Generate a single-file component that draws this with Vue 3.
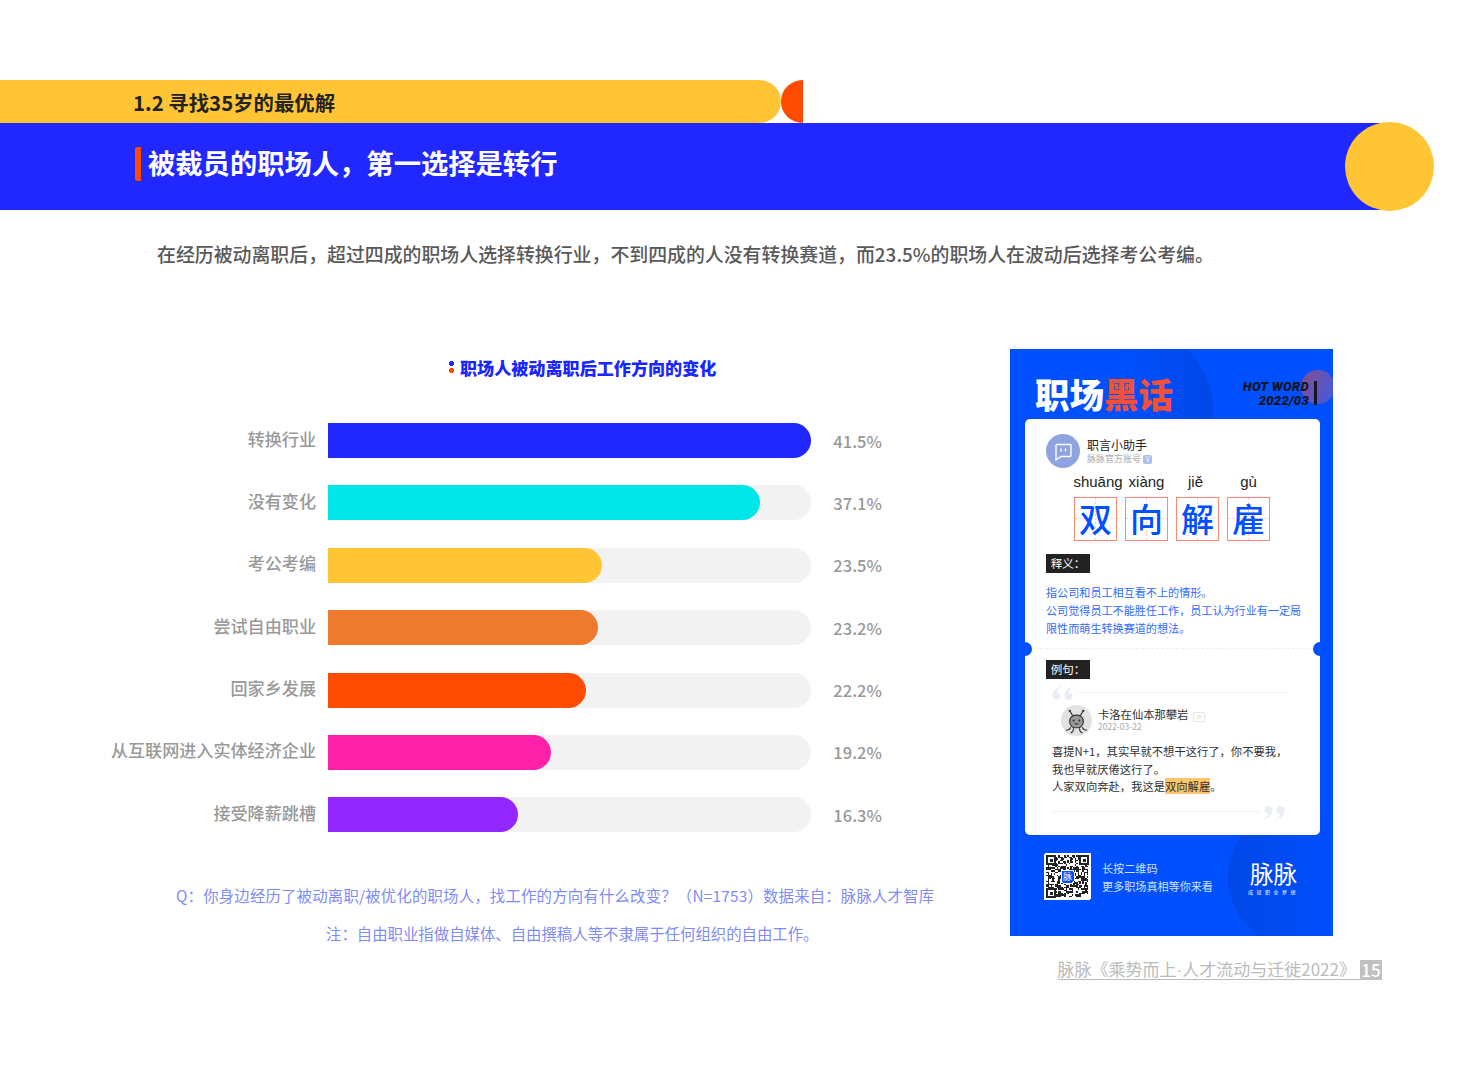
<template>
	<div class="page">
		<header class="head">
			<div class="chapter-row">
				<div class="chapter">1.2 寻找35岁的最优解</div>
				<div class="chapter-cap"></div>
			</div>
			<div class="band">
				<h1 class="band-title">被裁员的职场人，第一选择是转行</h1>
				<div class="band-ball"></div>
			</div>
		</header>

		<p class="summary">在经历被动离职后，超过四成的职场人选择转换行业，不到四成的人没有转换赛道，而23.5%的职场人在波动后选择考公考编。</p>

		<main class="main">
			<section class="chart">
				<h2 class="chart-title"><i class="dots"></i>职场人被动离职后工作方向的变化</h2>
				<div class="rows">
					<div class="row" v-for="r in rows" :key="r.name">
						<span class="row-label">{{ r.name }}</span>
						<div class="track">
							<div class="fill" :style="{ width: r.value / 41.5 * 100 + '%', background: r.color }"></div>
						</div>
						<span class="row-value">{{ r.value }}%</span>
					</div>
				</div>
				<p class="note note-q">Q：你身边经历了被动离职/被优化的职场人，找工作的方向有什么改变？（N=1753）数据来自：脉脉人才智库</p>
				<p class="note note-z">注：自由职业指做自媒体、自由撰稿人等不隶属于任何组织的自由工作。</p>
			</section>

			<aside class="side">
				<div class="poster">
					<div class="deco deco-a"></div>
					<div class="deco deco-b"></div>
					<div class="deco deco-c"></div>
					<div class="poster-head">
						<div class="poster-title">职场<em>黑话</em></div>
						<div class="hot">
							<div class="hot-text">HOT WORD<br />2022/03</div>
							<i class="hot-bar"></i>
						</div>
					</div>

					<div class="card">
						<div class="card-top">
							<div class="author">
								<svg class="author-icon" viewBox="0 0 34 34">
									<circle cx="17" cy="17" r="17" fill="#8fa3e0" />
									<path d="M10 10.500h14a1 1 0 0 1 1 1v10a1 1 0 0 1-1 1h-9l-5 3.500v-14.500a1 1 0 0 1 1-1z" fill="none" stroke="#fff" stroke-width="1.400" />
									<path d="M15 14.500v3M19.500 14.500v3" stroke="#fff" stroke-width="1.400" />
								</svg>
								<div>
									<div class="author-name">职言小助手</div>
									<div class="author-sub">脉脉官方账号 <i class="vip">V</i></div>
								</div>
							</div>
							<div class="word">
								<div class="word-col" v-for="w in word" :key="w.han">
									<span class="pinyin">{{ w.py }}</span>
									<span class="han">{{ w.han }}</span>
								</div>
							</div>
							<div class="tag tag-first">释义：</div>
							<p class="meaning">指公司和员工相互看不上的情形。<br />公司觉得员工不能胜任工作，员工认为行业有一定局<br />限性而萌生转换赛道的想法。</p>
						</div>

						<div class="cut">
							<i class="notch notch-l"></i>
							<i class="notch notch-r"></i>
						</div>

						<div class="card-bottom">
							<div class="tag">例句：</div>
							<div class="quote-open">
								<svg class="quote-mark" viewBox="0 0 22 15">
									<path d="M9 0.500C4 2 0.500 5 0.500 9.500a4 4 0 0 0 8 0.500a3.800 3.800 0 0 0-4-3.800C5 4 6.500 2.500 9 1.500zM21 0.500C16 2 12.500 5 12.500 9.500a4 4 0 0 0 8 0.500a3.800 3.800 0 0 0-4-3.800C17 4 18.500 2.500 21 1.500z" fill="#e8edf8" />
								</svg>
								<i class="quote-line"></i>
							</div>
							<div class="commenter">
								<svg class="commenter-icon" viewBox="0 0 32 32">
									<circle cx="16" cy="16" r="16" fill="#e2e2e2" />
									<path d="M9 6l3 5M23 6l-3 5" stroke="#333" stroke-width="1.200" />
									<circle cx="9" cy="6" r="1.200" fill="#333" />
									<circle cx="23" cy="6" r="1.200" fill="#333" />
									<rect x="9" y="10.500" width="14" height="13" rx="6" fill="#9a9a9a" stroke="#333" stroke-width="1.200" />
									<circle cx="13" cy="16" r="1" fill="#222" />
									<circle cx="19" cy="16" r="1" fill="#222" />
									<path d="M14 19.500h4" stroke="#222" stroke-width="1" />
									<path d="M10 23c-1 3-3 3-5 3M13 24c0 3-1 4-3 5M19 24c0 3 1 4 3 5M22 23c1 3 3 3 5 3" fill="none" stroke="#333" stroke-width="1.100" />
								</svg>
								<div>
									<div class="commenter-name">卡洛在仙本那攀岩 <i class="id-tag">ID</i></div>
									<div class="commenter-date">2022-03-22</div>
								</div>
							</div>
							<p class="example">喜提N+1，其实早就不想干这行了，你不要我，<br />我也早就厌倦这行了。<br />人家双向奔赴，我这是<mark>双向解雇</mark>。</p>
							<div class="quote-close">
								<i class="quote-line"></i>
								<svg class="quote-mark" viewBox="0 0 22 15">
									<path d="M1 14.500C6 13 9.500 10 9.500 5.500a4 4 0 0 0-8-0.500a3.800 3.800 0 0 0 4 3.800C5 11 3.500 12.500 1 13.500zM13 14.500C18 13 21.500 10 21.500 5.500a4 4 0 0 0-8-0.500a3.800 3.800 0 0 0 4 3.800C17 11 15.500 12.500 13 13.500z" fill="#e8edf8" />
								</svg>
							</div>
						</div>
					</div>

					<div class="poster-foot">
						<svg class="qr" viewBox="0 0 47 47" shape-rendering="crispEdges">
							<rect width="47" height="47" rx="2" fill="#fff" />
							<rect v-for="c in qrCells" :key="c.k" :x="c.x" :y="c.y" width="1.500" height="1.500" fill="#222" />
							<g v-for="f in qrFinders" :key="f.k" fill="none" stroke="#222">
								<rect :x="f.x + 1" :y="f.y + 1" width="8" height="8" fill="#fff" stroke-width="1.500" />
								<rect :x="f.x + 3.500" :y="f.y + 3.500" width="3" height="3" fill="#222" stroke-width="0" />
							</g>
							<rect x="17" y="17" width="13" height="13" rx="2" fill="#0050ff" stroke="#fff" />
							<text x="23.500" y="27" text-anchor="middle" class="qr-text">脉</text>
						</svg>
						<div class="foot-text">长按二维码<br />更多职场真相等你来看</div>
						<div class="logo">
							<div class="logo-name">脉脉</div>
							<div class="logo-sub">成就职业梦想</div>
						</div>
					</div>
				</div>

				<div class="pager">
					<span class="pager-text">脉脉《乘势而上<span class="pager-dot">·</span>人才流动与迁徙2022》</span>
					<span class="pager-num">15</span>
				</div>
			</aside>
		</main>
	</div>
</template>

<script setup>
	const rows = [
		{ name: '转换行业', value: 41.5, color: '#2128ff' },
		{ name: '没有变化', value: 37.1, color: '#00e5e8' },
		{ name: '考公考编', value: 23.5, color: '#ffc535' },
		{ name: '尝试自由职业', value: 23.2, color: '#ee7a2e' },
		{ name: '回家乡发展', value: 22.2, color: '#ff4b00' },
		{ name: '从互联网进入实体经济企业', value: 19.2, color: '#ff20a8' },
		{ name: '接受降薪跳槽', value: 16.3, color: '#9327ff' }
	]
	const word = [
		{ py: 'shuāng', han: '双' },
		{ py: 'xiàng', han: '向' },
		{ py: 'jiě', han: '解' },
		{ py: 'gù', han: '雇' }
	]
	// 二维码只是个样子，用固定种子撒点
	const qrCells = []
	let seed = 17
	for (let y = 2; y < 44; y += 1.5) {
		for (let x = 2; x < 44; x += 1.5) {
			seed = (seed * 1103515245 + 12345) % 2147483648
			if ((seed >> 8) % 100 < 50) qrCells.push({ k: x + '-' + y, x, y })
		}
	}
	const qrFinders = [
		{ k: 'a', x: 2, y: 2 },
		{ k: 'b', x: 35, y: 2 },
		{ k: 'c', x: 2, y: 35 }
	]
</script>

<style>
	body {
		background: #fff;
	}
</style>

<style scoped>
	.page {
		width: 1465px;
		height: 1079px;
		overflow: hidden;
		font-family: "Noto Sans CJK SC", "Noto Sans", sans-serif;
	}

	p,
	h1,
	h2 {
		margin: 0;
	}

	.head {
		padding-top: 80px;
	}

	.chapter-row {
		display: flex;
		height: 43px;
	}

	.chapter {
		width: 648px;
		padding-left: 133px;
		border-radius: 0 22px 22px 0;
		background: #ffc535;
		color: #222;
		font-size: 20.400px;
		font-weight: 700;
		line-height: 44px;
		white-space: nowrap;
	}

	.chapter-cap {
		width: 22px;
		border-radius: 22px 0 0 22px;
		background: #ff4b00;
	}

	.band {
		position: relative;
		width: 1390px;
		height: 87px;
		display: flex;
		align-items: center;
		background: #2128ff;
	}

	.band-title {
		margin-left: 135px;
		margin-top: -6px;
		padding: 0 0 4px 7px;
		border-left: 6px solid #ff4b00;
		border-radius: 3px 0 0 3px;
		color: #fff;
		font-size: 27.300px;
		font-weight: 700;
		line-height: 30px;
		white-space: nowrap;
	}

	.band-ball {
		position: absolute;
		left: 1345px;
		top: -1px;
		width: 89px;
		height: 89px;
		border-radius: 50%;
		background: #ffc535;
	}

	.summary {
		margin-top: 29px;
		padding-left: 157px;
		color: #595959;
		font-size: 18.900px;
		font-weight: 500;
		line-height: 30px;
		white-space: nowrap;
	}

	.main {
		display: flex;
		margin-top: 80px;
	}

	.chart {
		width: 882px;
		margin-right: 128px;
	}

	.chart-title {
		display: flex;
		align-items: center;
		height: 20px;
		margin: 8px 0 46px;
		padding-left: 449px;
		color: #1a26ff;
		font-size: 17.100px;
		font-weight: 900;
		white-space: nowrap;
	}

	.dots {
		width: 5px;
		height: 12px;
		margin-right: 6px;
		background:
			radial-gradient(circle at 2.500px 2.500px, #2128ff 2.500px, transparent 2.800px),
			radial-gradient(circle at 2.500px 9.500px, #ff4b00 2.500px, transparent 2.800px);
	}

	.rows {
		display: flex;
		flex-direction: column;
		gap: 27.400px;
	}

	.row {
		display: grid;
		grid-template-columns: 316px 483px 59px;
		column-gap: 12px;
		align-items: center;
		height: 35px;
	}

	.row-label {
		padding-bottom: 5px;
		color: #999;
		font-size: 17.100px;
		font-weight: 500;
		text-align: right;
		white-space: nowrap;
	}

	.row-value {
		color: #999;
		font-size: 16.500px;
		font-weight: 500;
		text-align: right;
	}

	.track {
		height: 35px;
		border-radius: 18px;
		background: #f2f2f2;
	}

	.fill {
		height: 100%;
		border-radius: 0 18px 18px 0;
	}

	.note {
		color: #7f8cf5;
		font-size: 15.400px;
		line-height: 38px;
		white-space: nowrap;
	}

	.note-q {
		margin-top: 44px;
		padding-left: 176px;
		letter-spacing: 0.190px;
	}

	.note-z {
		padding-left: 326px;
	}

	.side {
		width: 372px;
	}

	.poster {
		position: relative;
		width: 323px;
		height: 587px;
		padding: 0 13px 0 15px;
		box-sizing: border-box;
		overflow: hidden;
		background: #0050ff;
	}

	.deco {
		position: absolute;
		border-radius: 50%;
	}

	.deco-a {
		left: 37px;
		top: -22px;
		width: 166px;
		height: 166px;
		background: linear-gradient(90deg, #0050ff 45%, #0047e6 100%);
	}

	.deco-b {
		left: 218px;
		top: 456px;
		width: 144px;
		height: 144px;
		background: linear-gradient(90deg, #0047e6, #0050ff 80%);
	}

	.deco-c {
		left: 291px;
		top: 21px;
		width: 34px;
		height: 34px;
		background: linear-gradient(120deg, #a8506f, #5a5ad0 85%);
		opacity: 0.800;
	}

	.poster-head {
		position: relative;
		display: flex;
		justify-content: space-between;
		height: 70px;
		box-sizing: border-box;
		padding: 24px 0 0 10px;
	}

	.poster-title {
		color: #fff;
		font-size: 34.500px;
		font-weight: 900;
		line-height: 40px;
		white-space: nowrap;
	}

	.poster-title em {
		color: #f0503c;
		font-style: normal;
	}

	.hot {
		display: flex;
		gap: 5px;
		padding: 7px 3px 0 0;
	}

	.hot-text {
		color: #151520;
		font-family: Roboto, sans-serif;
		font-size: 13px;
		font-style: italic;
		font-weight: 900;
		line-height: 14px;
		letter-spacing: 0.300px;
		text-align: right;
		white-space: nowrap;
	}

	.hot-bar {
		width: 3px;
		height: 24px;
		margin-top: 1px;
		background: #151520;
	}

	.card {
		position: relative;
		height: 416px;
		border-radius: 5px;
		background: #fff;
	}

	.card-top {
		height: 229px;
		box-sizing: border-box;
		padding: 15px 0 0 21px;
	}

	.author {
		display: flex;
		gap: 7px;
	}

	.author-icon {
		width: 34px;
		height: 34px;
	}

	.author-name {
		margin-top: 2px;
		color: #222;
		font-size: 12px;
		line-height: 17px;
	}

	.author-sub {
		color: #aaa;
		font-size: 9px;
		line-height: 12px;
	}

	.vip {
		display: inline-block;
		width: 9px;
		height: 9px;
		border-radius: 2px;
		background: #a9bdf0;
		color: #fff;
		font-size: 7px;
		font-style: normal;
		line-height: 9px;
		text-align: center;
	}

	.word {
		display: flex;
		gap: 8px;
		margin: 4px 0 13px 28px;
	}

	.word-col {
		display: flex;
		flex-direction: column;
		align-items: center;
		width: 43px;
	}

	.word-col:first-child .pinyin {
		margin-left: 5px;
	}

	.word-col:nth-child(3) .pinyin {
		margin-right: 4px;
	}

	.pinyin {
		height: 25px;
		color: #222;
		font-family: "Liberation Sans", sans-serif;
		font-size: 15px;
		line-height: 20px;
		white-space: nowrap;
	}

	.han {
		width: 43px;
		height: 44px;
		box-sizing: border-box;
		border: 1.500px solid #ff8a70;
		background:
			repeating-linear-gradient(0deg, #ffc9bc 0 2px, transparent 2px 4px) 19.500px 0 / 1px 100% no-repeat,
			repeating-linear-gradient(90deg, #ffc9bc 0 2px, transparent 2px 4px) 0 19.500px / 100% 1px no-repeat;
		color: #0050ff;
		font-size: 33px;
		font-weight: 500;
		line-height: 41px;
		text-align: center;
	}

	.tag {
		width: 44px;
		height: 19px;
		background: #222;
		color: #fff;
		font-size: 11.500px;
		line-height: 19px;
		text-align: center;
	}

	.meaning {
		margin-top: 10px;
		color: #2f6bff;
		font-size: 11.100px;
		line-height: 18px;
		white-space: nowrap;
	}

	.cut {
		position: relative;
		border-top: 1px dashed #eee;
	}

	.notch {
		position: absolute;
		top: -7px;
		width: 14px;
		height: 14px;
		border-radius: 50%;
		background: #0050ff;
	}

	.notch-l {
		left: -7px;
	}

	.notch-r {
		right: -7px;
	}

	.card-bottom {
		padding: 11px 0 0 21px;
	}

	.quote-open {
		display: flex;
		align-items: flex-start;
		gap: 3px;
		height: 15px;
		margin: 7px 30px 0 6px;
	}

	.quote-open .quote-line {
		margin-top: 6px;
	}

	.quote-close {
		display: flex;
		align-items: flex-start;
		gap: 3px;
		height: 15px;
		margin: 9px 35px 0 6px;
	}

	.quote-close .quote-line {
		margin-top: 6px;
	}

	.quote-mark {
		width: 22px;
		height: 15px;
		flex: none;
	}

	.quote-line {
		flex: 1;
		height: 1px;
		background: #f2f3f5;
	}

	.commenter {
		display: flex;
		gap: 6px;
		margin: 4px 0 7px 15px;
	}

	.commenter-icon {
		width: 31px;
		height: 31px;
	}

	.commenter-name {
		margin-top: 2px;
		color: #333;
		font-size: 11.300px;
		line-height: 15px;
		white-space: nowrap;
	}

	.id-tag {
		display: inline-block;
		width: 10px;
		height: 8px;
		margin-left: 2px;
		border: 1px solid #e5e5e5;
		border-radius: 2px;
		color: #ccc;
		font-size: 5px;
		font-style: normal;
		line-height: 8px;
		text-align: center;
	}

	.commenter-date {
		color: #aaa;
		font-size: 8.500px;
		line-height: 9px;
	}

	.example {
		margin-left: 6px;
		color: #333;
		font-size: 11.300px;
		line-height: 17.600px;
		white-space: nowrap;
	}

	.example mark {
		background: #ffc56b;
		color: #333;
	}

	.poster-foot {
		position: relative;
		display: flex;
		align-items: flex-start;
		padding: 18px 0 0 19px;
	}

	.qr {
		width: 47px;
		height: 47px;
		flex: none;
	}

	.qr-text {
		fill: #fff;
		font-size: 9px;
	}

	.foot-text {
		margin: 6px 0 0 11px;
		color: #cfe0ff;
		font-size: 11.100px;
		line-height: 18px;
		white-space: nowrap;
	}

	.logo {
		margin: 7px 0 0 35px;
		color: #fff;
		text-align: center;
	}

	.logo-name {
		font-size: 23.500px;
		font-weight: 400;
		line-height: 26px;
		white-space: nowrap;
	}

	.logo-sub {
		margin-top: 3px;
		font-size: 5px;
		line-height: 6px;
		letter-spacing: 3.500px;
		white-space: nowrap;
	}

	.pager {
		display: flex;
		justify-content: flex-end;
		margin-top: 24px;
	}

	.pager-text {
		height: 19px;
		padding-right: 4px;
		border-bottom: 1px solid #bbb;
		color: #bbb;
		font-size: 17px;
		line-height: 17px;
		white-space: nowrap;
	}

	.pager-dot {
		font-family: "Liberation Sans", sans-serif;
	}

	.pager-num {
		width: 22px;
		height: 20px;
		background: #c0c0c0;
		color: #fff;
		font-size: 17px;
		font-weight: 500;
		line-height: 19px;
		text-align: center;
	}
</style>
